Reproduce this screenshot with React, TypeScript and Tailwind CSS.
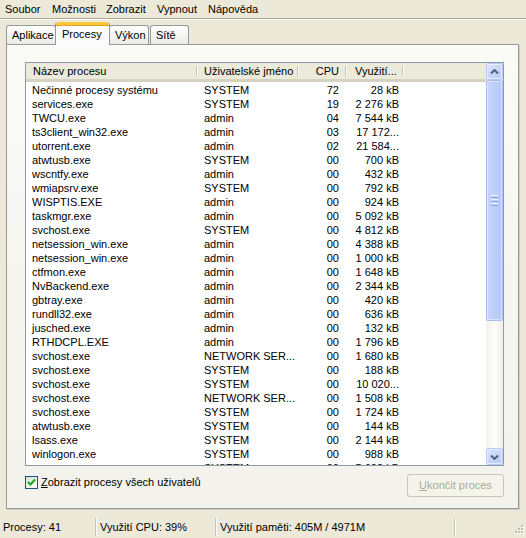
import React from "react";

type Row = { name: string; user: string; cpu: string; mem: string };

const rows: Row[] = [
  { name: "Nečinné procesy systému", user: "SYSTEM", cpu: "72", mem: "28 kB" },
  { name: "services.exe", user: "SYSTEM", cpu: "19", mem: "2 276 kB" },
  { name: "TWCU.exe", user: "admin", cpu: "04", mem: "7 544 kB" },
  { name: "ts3client_win32.exe", user: "admin", cpu: "03", mem: "17 172..." },
  { name: "utorrent.exe", user: "admin", cpu: "02", mem: "21 584..." },
  { name: "atwtusb.exe", user: "SYSTEM", cpu: "00", mem: "700 kB" },
  { name: "wscntfy.exe", user: "admin", cpu: "00", mem: "432 kB" },
  { name: "wmiapsrv.exe", user: "SYSTEM", cpu: "00", mem: "792 kB" },
  { name: "WISPTIS.EXE", user: "admin", cpu: "00", mem: "924 kB" },
  { name: "taskmgr.exe", user: "admin", cpu: "00", mem: "5 092 kB" },
  { name: "svchost.exe", user: "SYSTEM", cpu: "00", mem: "4 812 kB" },
  { name: "netsession_win.exe", user: "admin", cpu: "00", mem: "4 388 kB" },
  { name: "netsession_win.exe", user: "admin", cpu: "00", mem: "1 000 kB" },
  { name: "ctfmon.exe", user: "admin", cpu: "00", mem: "1 648 kB" },
  { name: "NvBackend.exe", user: "admin", cpu: "00", mem: "2 344 kB" },
  { name: "gbtray.exe", user: "admin", cpu: "00", mem: "420 kB" },
  { name: "rundll32.exe", user: "admin", cpu: "00", mem: "636 kB" },
  { name: "jusched.exe", user: "admin", cpu: "00", mem: "132 kB" },
  { name: "RTHDCPL.EXE", user: "admin", cpu: "00", mem: "1 796 kB" },
  { name: "svchost.exe", user: "NETWORK SER...", cpu: "00", mem: "1 680 kB" },
  { name: "svchost.exe", user: "SYSTEM", cpu: "00", mem: "188 kB" },
  { name: "svchost.exe", user: "SYSTEM", cpu: "00", mem: "10 020..." },
  { name: "svchost.exe", user: "NETWORK SER...", cpu: "00", mem: "1 508 kB" },
  { name: "svchost.exe", user: "SYSTEM", cpu: "00", mem: "1 724 kB" },
  { name: "atwtusb.exe", user: "SYSTEM", cpu: "00", mem: "144 kB" },
  { name: "lsass.exe", user: "SYSTEM", cpu: "00", mem: "2 144 kB" },
  { name: "winlogon.exe", user: "SYSTEM", cpu: "00", mem: "988 kB" },
  { name: "csrss.exe", user: "SYSTEM", cpu: "00", mem: "5 608 kB" },
];

const HeaderSep = () => (
  <div className="flex h-full items-center py-[3px]">
    <div className="h-full w-px bg-[#C7C5B2]" />
    <div className="h-full w-px bg-white" />
  </div>
);

const ScrollButton = ({ down }: { down?: boolean }) => (
  <div className="flex h-[17px] w-[17px] items-center justify-center rounded-[2px] border border-[#B7CAF5] bg-gradient-to-br from-[#D9E3FD] to-[#B6CBF9] shadow-[inset_0_0_0_1px_#E6EDFE]">
    <svg width="9" height="6" viewBox="0 0 9 6">
      {down ? (
        <path d="M1 1.5 L4.5 5 L8 1.5" stroke="#4D6185" strokeWidth="2" fill="none" />
      ) : (
        <path d="M1 4.5 L4.5 1 L8 4.5" stroke="#4D6185" strokeWidth="2" fill="none" />
      )}
    </svg>
  </div>
);

const Scrollbar = () => (
  <div className="flex h-full w-[17px] flex-col bg-gradient-to-r from-[#F3F1EC] via-[#FEFEFB] to-[#F0EEE6]">
    <ScrollButton />
    <div className="flex h-[241px] w-[17px] items-center justify-center rounded-[2px] border border-[#A8BCEF] bg-gradient-to-r from-[#C7D6FC] via-[#BCCFFB] to-[#B3C8F8] shadow-[inset_0_0_0_1px_#DCE5FD]">
      <div className="flex flex-col gap-[1px]">
        <div className="h-px w-[7px] bg-[#EEF3FE]" />
        <div className="h-px w-[7px] bg-[#8CA6E6]" />
        <div className="h-px w-[7px] bg-[#EEF3FE]" />
        <div className="h-px w-[7px] bg-[#8CA6E6]" />
        <div className="h-px w-[7px] bg-[#EEF3FE]" />
        <div className="h-px w-[7px] bg-[#8CA6E6]" />
      </div>
    </div>
    <div className="flex-1" />
    <ScrollButton down />
  </div>
);

const ListView = () => (
  <div className="flex h-[404px] border border-[#8D9AA8] bg-white">
    <div className="flex min-w-0 flex-1 flex-col overflow-hidden">
      <div className="flex h-[19px] shrink-0 items-center border-b-[3px] border-[#D6D2C2] bg-[#EBEADB] text-black">
        <div className="w-[170px] pl-[7px]">Název procesu</div>
        <HeaderSep />
        <div className="w-[99px] pl-[6px]">Uživatelské jméno</div>
        <HeaderSep />
        <div className="w-[46px] pr-[6px] text-right">CPU</div>
        <HeaderSep />
        <div className="w-[55px] pl-[8px]">Využití...</div>
        <HeaderSep />
      </div>
      <div className="pt-[1px]">
        {rows.map((r, i) => (
          <div key={i} className="flex h-[14px] items-center leading-[14px] text-black">
            <div className="w-[172px] whitespace-nowrap pl-[6px]">{r.name}</div>
            <div className="w-[101px] whitespace-nowrap pl-[6px]">{r.user}</div>
            <div className="w-[48px] pr-[8px] text-right">{r.cpu}</div>
            <div className="w-[57px] whitespace-nowrap pr-[5px] text-right">{r.mem}</div>
          </div>
        ))}
      </div>
    </div>
    <Scrollbar />
  </div>
);

const Checkbox = () => (
  <div className="flex h-[13px] w-[13px] items-center justify-center border border-[#1C5180] bg-gradient-to-br from-[#DCDCD7] to-white">
    <svg width="9" height="9" viewBox="0 0 9 9">
      <path d="M1 4 L3.5 6.5 L8 1.5" stroke="#21A121" strokeWidth="2" fill="none" />
    </svg>
  </div>
);

const Tab = ({ label, active, width }: { label: string; active?: boolean; width: string }) =>
  active ? (
    <div className={`relative z-10 -mx-[1px] -mb-px flex h-[23px] flex-col rounded-t-[3px] border-x border-[#919B9C] bg-[#FCFCFE] ${width}`}>
      <div className="h-[3px] rounded-t-[3px] bg-[#FFC83C] shadow-[0_1px_0_#E6A31E]" />
      <div className="pl-[6px] pt-[1px]">{label}</div>
    </div>
  ) : (
    <div className={`flex h-[19px] items-center rounded-t-[3px] border-x border-t border-[#919B9C] bg-gradient-to-b from-white to-[#ECEBE6] pl-[5px] ${width}`}>
      {label}
    </div>
  );

export default function App() {
  return (
    <div className="flex h-[538px] w-[526px] flex-col overflow-hidden bg-[#ECE9D8] font-['Liberation_Sans',Arial,sans-serif] text-[11px] text-black">
      {/* menu */}
      <div className="flex h-[18px] shrink-0 items-center pl-[5px]">
        <div className="w-[47px]">Soubor</div>
        <div className="w-[54px]">Možnosti</div>
        <div className="w-[51px]">Zobrazit</div>
        <div className="w-[51px]">Vypnout</div>
        <div>Nápověda</div>
      </div>
      <div className="h-px shrink-0 bg-[#ACA899]" />
      <div className="h-px shrink-0 bg-white" />

      {/* tabs */}
      <div className="mt-[1px] flex h-[23px] shrink-0 items-end pl-[6px]">
        <Tab label="Aplikace" width="w-[50px]" />
        <Tab label="Procesy" active width="w-[55px]" />
        <Tab label="Výkon" width="w-[40px]" />
        <div className="w-px" />
        <Tab label="Sítě" width="w-[39px]" />
      </div>

      {/* panel */}
      <div className="ml-[6px] mr-[7px] mb-[7px] flex flex-1 flex-col border border-[#919B9C] bg-gradient-to-b from-[#FAFAF7] to-[#F3F2EC] pl-[18px] pr-[14px] pt-[17px] shadow-[1px_1px_0_#D0CEBF]">
        <ListView />
        <div className="mt-[8px] flex items-start justify-between">
          <div className="flex items-center gap-[3px]">
            <Checkbox />
            <span>
              <span className="underline">Z</span>obrazit procesy všech uživatelů
            </span>
          </div>
          <div className="flex h-[23px] w-[97px] items-center justify-center rounded-[3px] border border-[#C9C7BA] bg-[#F5F4EA] text-[#ACA899]">
            <span>
              <span className="underline">U</span>končit proces
            </span>
          </div>
        </div>
      </div>

      {/* status bar */}
      <div className="flex h-[22px] shrink-0 items-center">
        <div className="w-[95px] pl-[3px]">Procesy: 41</div>
        <div className="h-[18px] w-px bg-[#C9C6B6]" />
        <div className="h-[18px] w-px bg-white" />
        <div className="w-[118px] pl-[3px]">Využití CPU: 39%</div>
        <div className="h-[18px] w-px bg-[#C9C6B6]" />
        <div className="h-[18px] w-px bg-white" />
        <div className="w-[237px] pl-[3px]">Využití paměti: 405M / 4971M</div>
        <div className="h-[18px] w-px bg-[#C9C6B6]" />
        <div className="h-[18px] w-px bg-white" />
        <div className="flex h-full flex-1 items-end justify-end pb-[2px] pr-[2px]">
          <svg width="12" height="12" viewBox="0 0 12 12">
            {[
              [9, 1],
              [6, 4],
              [9, 4],
              [3, 7],
              [6, 7],
              [9, 7],
            ].map(([x, y], i) => (
              <g key={i}>
                <rect x={x + 1} y={y + 1} width="2" height="2" fill="#FFFFFF" />
                <rect x={x} y={y} width="2" height="2" fill="#C1BEB0" />
              </g>
            ))}
          </svg>
        </div>
      </div>
    </div>
  );
}
